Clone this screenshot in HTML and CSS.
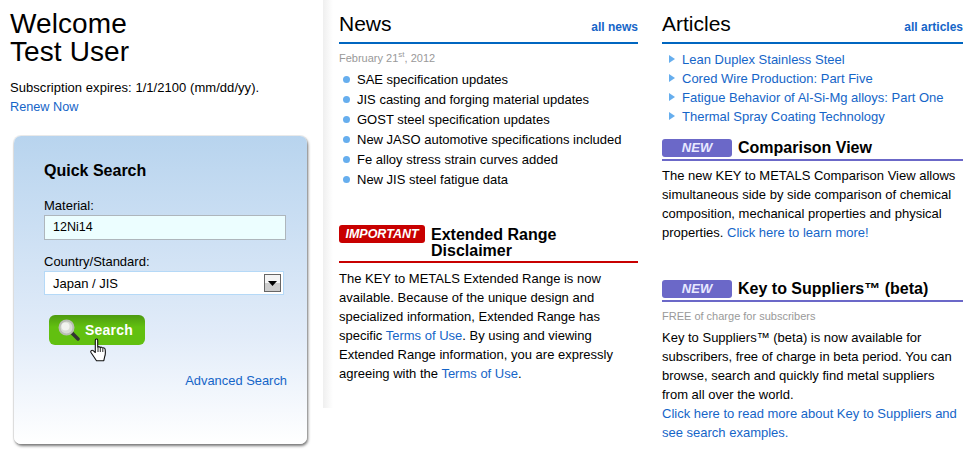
FILE: index.html
```html
<!DOCTYPE html>
<html lang="en">
<head>
<meta charset="utf-8">
<title>Key to Metals</title>
<link rel="stylesheet" href="styles.css">
</head>
<body>
<div class="page">
  <aside class="left">
    <h1 class="welcome">Welcome<br>Test User</h1>
    <p class="expires">Subscription expires: 1/1/2100 (mm/dd/yy).</p>
    <a class="renew" href="#">Renew Now</a>
    <section class="panel">
      <h2 class="panel-title">Quick Search</h2>
      <div class="label">Material:</div>
      <div class="input">12Ni14</div>
      <div class="label label-country">Country/Standard:</div>
      <div class="select"><span>Japan / JIS</span>
        <span class="select-btn"><svg width="9" height="5" viewBox="0 0 9 5"><path d="M0 0h9L4.500 5z" fill="#000"/></svg></span>
      </div>
      <div class="button">
        <svg class="lens" width="22" height="22" viewBox="0 0 22 22"><path d="M13 13l7 7" stroke="#333" stroke-width="3.500" stroke-linecap="round"/><circle cx="8.500" cy="8.500" r="7" fill="#d8dcd4" stroke="#b9bdb4" stroke-width="2"/><circle cx="7.500" cy="7.500" r="4" fill="#f1f3ee"/></svg>
        <span>Search</span>
        <svg class="hand" width="18" height="24" viewBox="0 0 18 24"><path d="M5.500 1.500c1-1 2.200-.5 2.200 1v6.500c1-.6 2-.4 2.400.4 1-.5 2-.3 2.400.6 1-.4 2.400 0 2.600 1.200.4 2.500.4 5-.3 7l-1 4.500H6.500L1 14.500c-.8-1.500.8-3 2.200-1.800l2.100 1.800V2.500z" fill="#fff" stroke="#111" stroke-width="1.100" stroke-linejoin="round"/><path d="M8 9v5M10.300 9.500V14M12.800 10.500V14" stroke="#111" stroke-width=".9"/></svg>
      </div>
      <div class="advanced"><a href="#">Advanced Search</a></div>
    </section>
  </aside>
  <div class="shade"></div>
  <main class="middle">
    <header class="head"><h2>News</h2><a href="#">all news</a></header>
    <div class="date">February 21<sup>st</sup>, 2012</div>
    <ul class="news">
      <li>SAE specification updates</li>
      <li>JIS casting and forging material updates</li>
      <li>GOST steel specification updates</li>
      <li>New JASO automotive specifications included</li>
      <li>Fe alloy stress strain curves added</li>
      <li>New JIS steel fatigue data</li>
    </ul>
    <header class="tagged tagged-red">
      <span class="tag tag-red">IMPORTANT</span>
      <h3>Extended Range Disclaimer</h3>
    </header>
    <p class="copy copy-disclaimer">The KEY to METALS Extended Range is now available. Because of the unique design and specialized information, Extended Range has specific <a href="#">Terms of Use</a>. By using and viewing Extended Range information, you are expressly agreeing with the <a href="#">Terms of Use</a>.</p>
  </main>
  <section class="right">
    <header class="head"><h2>Articles</h2><a href="#">all articles</a></header>
    <ul class="articles">
      <li><a href="#">Lean Duplex Stainless Steel</a></li>
      <li><a href="#">Cored Wire Production: Part Five</a></li>
      <li><a href="#">Fatigue Behavior of Al-Si-Mg alloys: Part One</a></li>
      <li><a href="#">Thermal Spray Coating Technology</a></li>
    </ul>
    <header class="tagged tagged-new">
      <span class="tag tag-new">NEW</span>
      <h3>Comparison View</h3>
    </header>
    <p class="copy">The new KEY to METALS Comparison View allows simultaneous side by side comparison of chemical composition, mechanical properties and physical properties. <a href="#">Click here to learn more!</a></p>
    <header class="tagged tagged-new second">
      <span class="tag tag-new">NEW</span>
      <h3>Key to Suppliers™ (beta)</h3>
    </header>
    <div class="free">FREE of charge for subscribers</div>
    <p class="copy copy-suppliers">Key to Suppliers™ (beta) is now available for subscribers, free of charge in beta period. You can browse, search and quickly find metal suppliers from all over the world.<br><a href="#">Click here to read more about Key to Suppliers and see search examples.</a></p>
  </section>
</div>
</body>
</html>
```
FILE: styles.css
```css
* { box-sizing: border-box; }
html, body { margin: 0; padding: 0; background: #fff; }
body { font-family: "Liberation Sans", Arial, sans-serif; font-size: 13px; color: #000; width: 969px; height: 458px; overflow: hidden; }
a { color: #1565c8; text-decoration: none; }
h1, h2, h3, p, ul { margin: 0; padding: 0; font-weight: normal; }
ul { list-style: none; }

.page { display: flex; align-items: flex-start; }

.left { width: 323px; padding: 10px 0 0 10px; }
.welcome { font-size: 28px; line-height: 28px; margin-bottom: 12px; letter-spacing: .1px; }
.expires { font-size: 13px; line-height: 20px; letter-spacing: .05px; }
.renew { display: block; font-size: 12.700px; line-height: 18px; }

.panel { width: 293px; height: 308px; margin: 20px 0 0 4px; padding: 25px 20px 0 30px; border-radius: 7px; background: linear-gradient(#b8d4ee, #e2ecf9 65%, #fff); box-shadow: 1px 2px 3px #777, 0 0 0 1px #eee; }
.panel-title { font-size: 16px; font-weight: bold; line-height: 20px; margin-bottom: 17px; }
.label { font-size: 13px; line-height: 16px; margin-bottom: 1px; }
.label-country { margin-top: 14px; margin-bottom: 1px; }
.input { width: 242px; height: 25px; background: #ecfeff; border: 1px solid #aeb6bc; padding-left: 8px; font-size: 12.500px; line-height: 23px; }
.select { width: 240px; height: 24px; background: #fff; border: 1px solid #b5d9f7; padding: 0 2px 0 8px; display: flex; align-items: center; justify-content: space-between; font-size: 13px; }
.select-btn { width: 17px; height: 18px; border: 1px solid #666; background: linear-gradient(#f4f4f4 50%, #ccc 50%); display: flex; align-items: center; justify-content: center; }
.button { position: relative; width: 96px; height: 30px; margin: 20px 0 0 5px; border-radius: 6px; background: linear-gradient(#4d9a10, #62c010 40%); display: flex; align-items: center; padding-left: 9px; gap: 5px; color: #fff; font-size: 14px; font-weight: bold; letter-spacing: .2px; }
.hand { position: absolute; left: 41px; top: 23px; }
.advanced { text-align: right; margin: 28px 0 0; font-size: 12.900px; line-height: 16px; }

.shade { width: 10px; height: 408px; background: linear-gradient(90deg, #efefef, #fff); }

.middle { width: 299px; margin-left: 6px; }
.right { width: 301px; margin-left: 24px; }

.head { display: flex; justify-content: space-between; align-items: flex-end; height: 44px; border-bottom: 2px solid #0066c0; padding-bottom: 6px; }
.head h2 { font-size: 21px; line-height: 24px; }
.head a { font-size: 12px; font-weight: bold; line-height: 15px; margin-bottom: 1px; }

.date { font-size: 11px; color: #999; line-height: 14px; margin-top: 7px; }
.date sup { font-size: 8px; line-height: 0; }

.news { margin-top: 5px; }
.news li { font-size: 13px; line-height: 20px; padding-left: 18px; position: relative; }
.news li::before { content: ""; position: absolute; left: 4px; top: 6px; width: 7px; height: 7px; border-radius: 50%; background: #66aeee; }

.tagged { display: flex; align-items: flex-start; }
.tagged h3 { font-size: 16px; font-weight: bold; line-height: 16px; }
.tag { flex: none; color: #fff; font-style: italic; font-weight: bold; font-size: 12.500px; text-align: center; border-radius: 3px; }
.tagged-red { border-bottom: 2px solid #c80000; margin-top: 35px; padding-bottom: 2px; width: 299px; }
.tagged-red h3 { padding-top: 2px; width: 150px; margin-left: 6px; }
.tag-red { width: 86px; height: 18px; line-height: 18px; background: #c80000; }
.tagged-new { border-bottom: 2px solid #6b68c8; margin-top: 13px; height: 22px; }
.tagged-new h3 { margin-left: 6px; line-height: 18px; }
.tag-new { width: 70px; height: 18px; line-height: 18px; background: #6b68c8; font-size: 13px; color: #e8e8ff; }
.second { margin-top: 38px; }

.copy { font-size: 13px; line-height: 19px; margin-top: 5px; }
.copy-disclaimer { margin-top: 6px; }
.free { font-size: 11px; color: #999; line-height: 14px; margin-top: 7px; }
.copy-suppliers { margin-top: 5px; }

.articles { margin-top: 6px; }
.articles li { font-size: 13px; line-height: 19px; padding-left: 20px; position: relative; }
.articles li::before { content: ""; position: absolute; left: 7px; top: 5px; border-left: 6px solid #66aeee; border-top: 4px solid transparent; border-bottom: 4px solid transparent; }
```
